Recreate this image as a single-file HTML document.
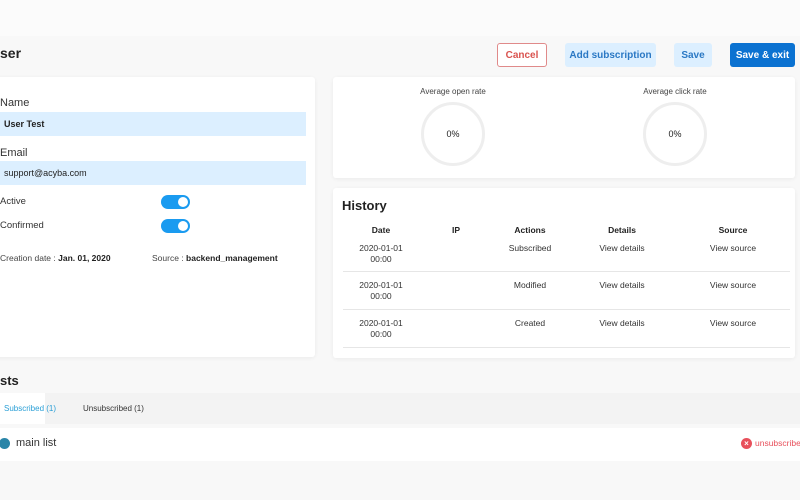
<!DOCTYPE html>
<html><head><style>
*{margin:0;padding:0;box-sizing:border-box}
body{width:800px;height:500px;overflow:hidden;background:#f8f8f8;font-family:"Liberation Sans",sans-serif;color:#222;position:relative}
.a{position:absolute}
.card{position:absolute;background:#fff;border-radius:3px;box-shadow:0 1px 4px rgba(0,0,0,.06)}
.btn{position:absolute;height:24px;border-radius:3px;font-size:10px;display:flex;align-items:center;justify-content:center;font-weight:bold}
.in{position:absolute;left:0;width:306px;height:24px;background:#dcefff;font-size:9px;font-weight:bold;line-height:24px;padding-left:4px}
.lbl{position:absolute;left:0;font-size:11px;color:#333}
.tg{position:absolute;left:161px;width:29px;height:14px;border-radius:7px;background:#1a9bf0}
.tg:after{content:"";position:absolute;right:2px;top:2px;width:10px;height:10px;border-radius:50%;background:#fff}
.ring{position:absolute;width:64px;height:64px;border:3px solid #eee;border-radius:50%;font-size:9px;text-align:center;line-height:58px}
.t{position:absolute;font-size:8.5px;color:#333;text-align:center;width:80px}
.hl{position:absolute;left:343px;width:447px;height:1px;background:#e6e6e6}
</style></head><body>
<div class="a" style="left:0;top:0;width:800px;height:36px;background:#fbfbfb"></div>
<div class="a" style="left:0;top:45px;font-size:14px;font-weight:bold">ser</div>
<div class="btn" style="left:497px;top:43px;width:50px;border:1px solid #e08a8a;color:#d9534f;background:#fff">Cancel</div>
<div class="btn" style="left:565px;top:43px;width:91px;background:#dcefff;color:#2a78c4">Add subscription</div>
<div class="btn" style="left:674px;top:43px;width:38px;background:#dcefff;color:#2a78c4">Save</div>
<div class="btn" style="left:730px;top:43px;width:65px;background:#0b72d1;color:#fff">Save &amp; exit</div>

<div class="card" style="left:-5px;top:77px;width:320px;height:280px"></div>
<div class="lbl" style="top:97px">Name</div>
<div class="in" style="top:112px">User Test</div>
<div class="lbl" style="top:147px">Email</div>
<div class="in" style="top:161px;font-weight:normal;color:#222">support@acyba.com</div>
<div class="lbl" style="top:196px;font-size:9.5px">Active</div>
<div class="tg" style="top:195px"></div>
<div class="lbl" style="top:220px;font-size:9.5px">Confirmed</div>
<div class="tg" style="top:219px"></div>
<div class="lbl" style="top:253px;font-size:8.5px;color:#444">Creation date : <b style="color:#222">Jan. 01, 2020</b></div>
<div class="a" style="left:152px;top:253px;font-size:8.5px;color:#444">Source : <b style="color:#222">backend_management</b></div>

<div class="card" style="left:333px;top:77px;width:462px;height:101px"></div>
<div class="a" style="left:400px;top:87px;width:106px;text-align:center;font-size:8px;color:#444">Average open rate</div>
<div class="ring" style="left:421px;top:102px">0%</div>
<div class="a" style="left:622px;top:87px;width:106px;text-align:center;font-size:8px;color:#444">Average click rate</div>
<div class="ring" style="left:643px;top:102px">0%</div>

<div class="card" style="left:333px;top:188px;width:462px;height:170px"></div>
<div class="a" style="left:342px;top:198px;font-size:13px;font-weight:bold">History</div>
<div class="t" style="left:341px;top:225px;font-weight:bold;color:#222">Date</div>
<div class="t" style="left:416px;top:225px;font-weight:bold;color:#222">IP</div>
<div class="t" style="left:490px;top:225px;font-weight:bold;color:#222">Actions</div>
<div class="t" style="left:582px;top:225px;font-weight:bold;color:#222">Details</div>
<div class="t" style="left:693px;top:225px;font-weight:bold;color:#222">Source</div>

<div class="t" style="left:341px;top:243px;line-height:11px">2020-01-01<br>00:00</div>
<div class="t" style="left:490px;top:243px">Subscribed</div>
<div class="t" style="left:582px;top:243px">View details</div>
<div class="t" style="left:693px;top:243px">View source</div>
<div class="hl" style="top:271px"></div>
<div class="t" style="left:341px;top:280px;line-height:11px">2020-01-01<br>00:00</div>
<div class="t" style="left:490px;top:280px">Modified</div>
<div class="t" style="left:582px;top:280px">View details</div>
<div class="t" style="left:693px;top:280px">View source</div>
<div class="hl" style="top:309px"></div>
<div class="t" style="left:341px;top:318px;line-height:11px">2020-01-01<br>00:00</div>
<div class="t" style="left:490px;top:318px">Created</div>
<div class="t" style="left:582px;top:318px">View details</div>
<div class="t" style="left:693px;top:318px">View source</div>
<div class="hl" style="top:347px"></div>

<div class="a" style="left:0;top:373px;font-size:13px;font-weight:bold">sts</div>
<div class="a" style="left:0;top:393px;width:800px;height:31px;background:#f3f3f3"></div>
<div class="a" style="left:0;top:393px;width:45px;height:31px;background:#fff"></div>
<div class="a" style="left:4px;top:404px;font-size:8px;color:#2a9fd6">Subscribed (1)</div>
<div class="a" style="left:83px;top:404px;font-size:8px;color:#333">Unsubscribed (1)</div>
<div class="a" style="left:0;top:428px;width:800px;height:33px;background:#fff"></div>
<div class="a" style="left:-1px;top:438px;width:11px;height:11px;border-radius:50%;background:#2a85a8"></div>
<div class="a" style="left:16px;top:437px;font-size:11px;color:#333">main list</div>
<div class="a" style="left:741px;top:438px;width:11px;height:11px;border-radius:50%;background:#e8505b;color:#fff;font-size:8px;line-height:11px;text-align:center;font-weight:bold">×</div>
<div class="a" style="left:755px;top:438px;font-size:8.5px;color:#e8505b;white-space:nowrap">unsubscribe</div>
</body></html>
